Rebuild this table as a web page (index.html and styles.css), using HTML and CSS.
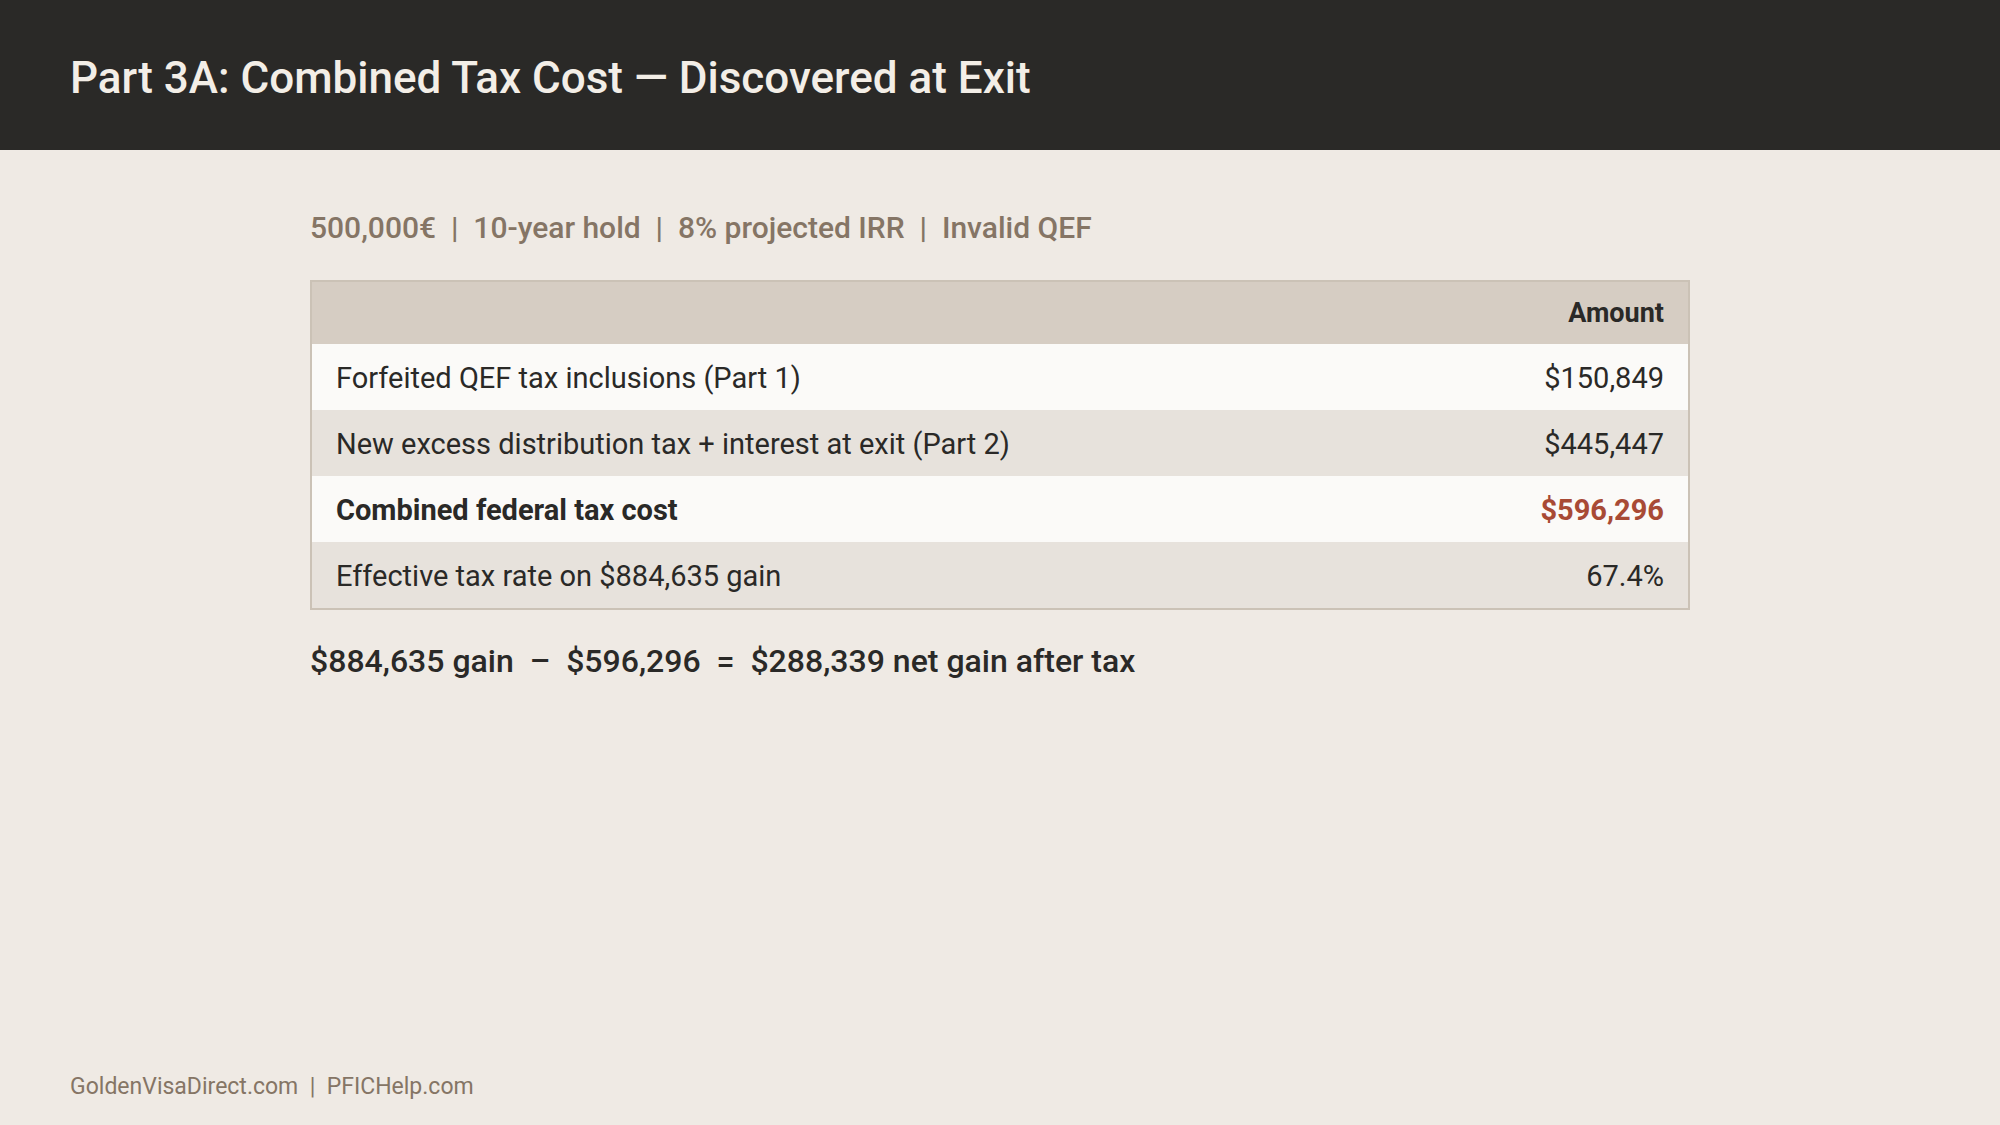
FILE: index.html
```html
<!DOCTYPE html>
<html lang="en">
<head>
<meta charset="utf-8">
<title>Part 3A: Combined Tax Cost</title>
<link rel="stylesheet" href="styles.css">
</head>
<body>
<header class="topbar">
  <h1 class="title">Part 3A: Combined Tax Cost — Discovered at Exit</h1>
</header>
<main class="content">
  <p class="subtitle">500,000€&nbsp;&nbsp;|&nbsp;&nbsp;10-year hold&nbsp;&nbsp;|&nbsp;&nbsp;8% projected IRR&nbsp;&nbsp;|&nbsp;&nbsp;Invalid QEF</p>
  <table class="costs">
    <thead>
      <tr><th class="label-col"></th><th class="amount-col">Amount</th></tr>
    </thead>
    <tbody>
      <tr class="row-light"><td>Forfeited QEF tax inclusions (Part 1)</td><td class="amount">$150,849</td></tr>
      <tr class="row-dark"><td>New excess distribution tax + interest at exit (Part 2)</td><td class="amount">$445,447</td></tr>
      <tr class="row-light total"><td>Combined federal tax cost</td><td class="amount highlight">$596,296</td></tr>
      <tr class="row-dark"><td>Effective tax rate on $884,635 gain</td><td class="amount">67.4%</td></tr>
    </tbody>
  </table>
  <p class="summary">$884,635 gain&nbsp;&nbsp;–&nbsp;&nbsp;$596,296&nbsp;&nbsp;=&nbsp;&nbsp;$288,339 net gain after tax</p>
</main>
<footer class="footer">GoldenVisaDirect.com&nbsp;&nbsp;|&nbsp;&nbsp;PFICHelp.com</footer>
</body>
</html>
```
FILE: styles.css
```css
* { box-sizing: border-box; }
html, body { margin: 0; padding: 0; }
body {
  width: 2000px;
  height: 1125px;
  background: #efeae4;
  font-family: Roboto, "Liberation Sans", sans-serif;
  color: #2a2927;
  display: flex;
  flex-direction: column;
  overflow: hidden;
}
.topbar {
  height: 150px;
  background: #2a2927;
  padding: 52px 70px 0;
}
.title {
  margin: 0;
  font-size: 44px;
  line-height: 52px;
  font-weight: 500;
  color: #f3eee7;
}
.content {
  flex: 1;
  width: 1380px;
  margin: 0 auto;
  padding-top: 60px;
}
.subtitle {
  margin: 0 0 34px;
  font-size: 30px;
  line-height: 36px;
  font-weight: 500;
  color: #857565;
}
.costs {
  width: 100%;
  border-collapse: separate;
  border-spacing: 0;
  border: 2px solid #cbc2b6;
  font-size: 29px;
}
.costs th {
  height: 62px;
  background: #d6cdc3;
  font-size: 27px;
  font-weight: 700;
  padding: 0 24px;
  text-align: right;
  color: #2a2927;
}
.costs td {
  height: 66px;
  padding: 2px 24px 0;
  line-height: 32px;
}
.row-light td { background: #fbfaf8; }
.row-dark td { background: #e7e2dc; }
.total td { font-weight: 700; }
.amount { text-align: right; }
.highlight { color: #a84a35; }
.summary {
  margin: 32px 0 0;
  font-size: 32px;
  line-height: 38px;
  font-weight: 500;
  color: #2a2927;
}
.footer {
  padding: 0 70px 25px;
  font-size: 23px;
  line-height: 26px;
  color: #857565;
}
```
